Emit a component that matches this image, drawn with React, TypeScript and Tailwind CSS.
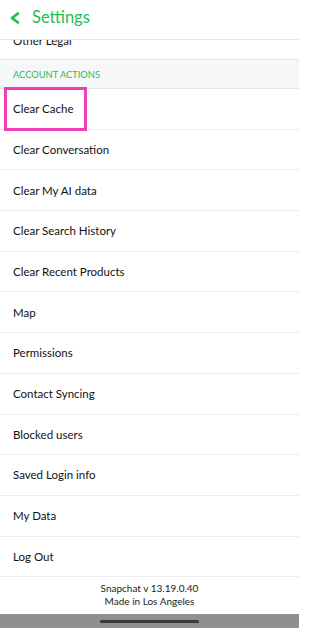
const ROWS = [
  'Clear Cache',
  'Clear Conversation',
  'Clear My AI data',
  'Clear Search History',
  'Clear Recent Products',
  'Map',
  'Permissions',
  'Contact Syncing',
  'Blocked users',
  'Saved Login info',
  'My Data',
  'Log Out',
];

export default function App() {
  return (
    <div
      className="w-[299px] h-[628px] bg-white flex flex-col overflow-hidden text-[#111]"
      style={{ fontFamily: 'Lato, "Noto Sans", sans-serif' }}
    >
      {/* Header */}
      <div className="h-[40px] flex items-center border-b border-[#e6e7ea] bg-white relative z-10 shrink-0">
        <svg className="ml-[10px] mb-[3px]" width="10" height="12" viewBox="0 0 10 12" fill="none">
          <polyline points="7.8,1.6 2,6 7.8,10.4" stroke="#21c052" strokeWidth="2.8" strokeLinecap="round" strokeLinejoin="round" />
        </svg>
        <span className="ml-[12px] text-[16.5px] leading-none text-[#21c052] mb-[5px]">Settings</span>
      </div>

      {/* Cut-off row */}
      <div className="h-[20px] shrink-0 overflow-hidden border-b border-[#e6e7ea] relative">
        <span className="absolute left-[13px] top-[-9px] text-[11.5px] leading-[20px]">Other Legal</span>
      </div>

      {/* Section header */}
      <div className="h-[29px] shrink-0 bg-[#f6f7f9] border-b border-[#e6e7ea] flex items-center px-[13px]">
        <span className="text-[9.3px] text-[#27bd50] mt-[1px]">ACCOUNT ACTIONS</span>
      </div>

      {/* Rows */}
      <div className="flex flex-col">
        {ROWS.map((label, i) => (
          <div
            key={label}
            className="h-[40.7px] flex items-center border-b border-[#ececee] px-[13px] relative"
          >
            <span className="text-[11.5px]">{label}</span>
            {i === 0 && (
              <div className="absolute left-[4px] top-[-2px] w-[83px] h-[44px] border-[3px] border-[#ee3fb8]" />
            )}
          </div>
        ))}
      </div>

      {/* Footer */}
      <div className="flex-1 flex flex-col items-center justify-center text-[10px] leading-[13px] text-[#222] pb-[2px]">
        <span>Snapchat v 13.19.0.40</span>
        <span>Made in Los Angeles</span>
      </div>

      {/* Home indicator bar */}
      <div className="h-[14px] shrink-0 bg-[#8e8e93] flex items-center justify-center">
        <div className="w-[99px] h-[3px] bg-[#3a3a3c] rounded-full" />
      </div>
    </div>
  );
}
